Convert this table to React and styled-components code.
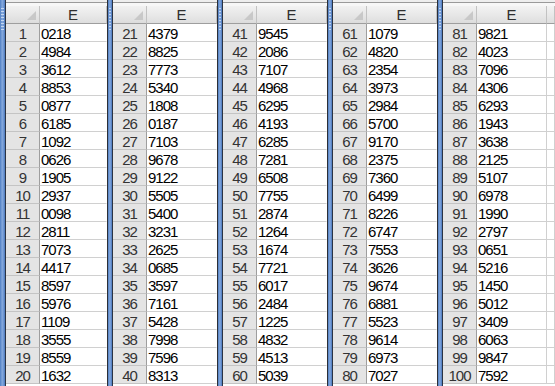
import React from "react";
import styled, { createGlobalStyle } from "styled-components";

const GlobalStyle = createGlobalStyle`
  html, body { margin: 0; padding: 0; background: #ffffff; overflow: hidden; }
  #root { width: 555px; height: 386px; }
`;

const DATA = [
  "0218","4984","3612","8853","0877","6185","1092","0626","1905","2937","0098","2811","7073","4417","8597","5976","1109","3555","8559","1632",
  "4379","8825","7773","5340","1808","0187","7103","9678","9122","5505","5400","3231","2625","0685","3597","7161","5428","7998","7596","8313",
  "9545","2086","7107","4968","6295","4193","6285","7281","6508","7755","2874","1264","1674","7721","6017","2484","1225","4832","4513","5039",
  "1079","4820","2354","3973","2984","5700","9170","2375","7360","6499","8226","6747","7553","3626","9674","6881","5523","9614","6973","7027",
  "9821","4023","7096","4306","6293","1943","3638","2125","5107","6978","1990","2797","0651","5216","1450","5012","3409","6063","9847","7592",
];

const Sheet = styled.div`
  display: flex;
  width: 555px;
  height: 386px;
  overflow: hidden;
  font-family: "Liberation Sans", Arial, sans-serif;
  font-size: 15px;
  letter-spacing: -1px;
`;

const Pane = styled.div`
  display: flex;
  flex: ${(p) => (p.$last ? "1 1 auto" : "0 0 auto")};
  height: 386px;
  overflow: hidden;
`;

const Splitter = styled.div`
  position: relative;
  flex: 0 0 6px;
  box-sizing: border-box;
  border-left: 1px solid ${(p) => (p.$first ? "transparent" : "#2b2f38")};
  border-right: 1px solid #2b3444;
  background: linear-gradient(90deg, #4f7fc4 0%, #86a9dc 45%, #6f97d3 70%, #4a78bd 100%);
  ${(p) => (p.$first ? "border-left: none; flex-basis: 6px;" : "")}
`;

const Grip = styled.div`
  position: absolute;
  left: 1px;
  right: 1px;
  top: 8px;
  height: 22px;
  background: repeating-linear-gradient(180deg, #d6e4f7 0 1px, transparent 1px 3px);
  opacity: 0.8;
`;

const Body = styled.div`
  display: flex;
  flex-direction: column;
  flex: 1 1 auto;
  overflow: hidden;
`;

const TopBand = styled.div`
  height: 6px;
  flex: 0 0 6px;
  box-sizing: border-box;
  background: linear-gradient(180deg, #eeeeee 0 2px, #9a9a9a 2px 3px, #f7f7f7 3px 6px);
`;

const Grid = styled.div`
  display: grid;
  grid-template-columns: 34px ${(p) => p.$dataWidth}px ${(p) => (p.$extra ? "1fr" : "")};
  grid-auto-rows: 18px;
`;

const Corner = styled.div`
  position: relative;
  box-sizing: border-box;
  background: linear-gradient(180deg, #f1f1f1 0%, #e6e6e6 55%, #dcdcdc 100%);
  border-right: 1px solid #c2c2c2;
  border-bottom: 1px solid #9e9e9e;
`;

const CornerMark = styled.div`
  position: absolute;
  right: 3px;
  bottom: 3px;
  width: 0;
  height: 0;
  border-left: 9px solid transparent;
  border-bottom: 9px solid #c8c8c8;
`;

const ColHead = styled.div`
  box-sizing: border-box;
  display: flex;
  align-items: center;
  justify-content: center;
  color: #2f2f2f;
  background: linear-gradient(180deg, #f3f3f3 0%, #e8e8e8 55%, #dedede 100%);
  border-right: 1px solid #c2c2c2;
  border-bottom: 1px solid #9e9e9e;
  letter-spacing: 0;
`;

const RowHead = styled.div`
  box-sizing: border-box;
  display: flex;
  align-items: center;
  justify-content: center;
  color: #333333;
  background: #e4e4e4;
  border-right: 1px solid #9e9e9e;
  border-bottom: 1px solid #c4c4c4;
  padding-top: 1px;
`;

const Cell = styled.div`
  box-sizing: border-box;
  display: flex;
  align-items: center;
  padding: 1px 0 0 1px;
  color: #000000;
  background: #ffffff;
  border-right: 1px solid ${(p) => (p.$edge ? "transparent" : "#d0d0d0")};
  border-bottom: 1px solid #d0d0d0;
  white-space: nowrap;
  overflow: hidden;
`;

const PANES = [
  { first: true, dataWidth: 67 },
  { dataWidth: 70 },
  { dataWidth: 70 },
  { dataWidth: 70 },
  { dataWidth: 70, extra: true, last: true },
];

function SheetPane({ index, first, dataWidth, extra, last }) {
  const rows = Array.from({ length: 20 }, (_, i) => index * 20 + i);
  return (
    <Pane $last={last}>
      <Splitter $first={first}>
        <Grip />
      </Splitter>
      <Body>
        <TopBand />
        <Grid $dataWidth={dataWidth} $extra={extra}>
          <Corner>
            <CornerMark />
          </Corner>
          <ColHead>E</ColHead>
          {extra && <ColHead />}
          {rows.map((r) => (
            <React.Fragment key={r}>
              <RowHead>{r + 1}</RowHead>
              <Cell $edge={!extra}>{DATA[r]}</Cell>
              {extra && <Cell />}
            </React.Fragment>
          ))}
        </Grid>
      </Body>
    </Pane>
  );
}

export default function App() {
  return (
    <>
      <GlobalStyle />
      <Sheet>
        {PANES.map((p, i) => (
          <SheetPane key={i} index={i} {...p} />
        ))}
      </Sheet>
    </>
  );
}
